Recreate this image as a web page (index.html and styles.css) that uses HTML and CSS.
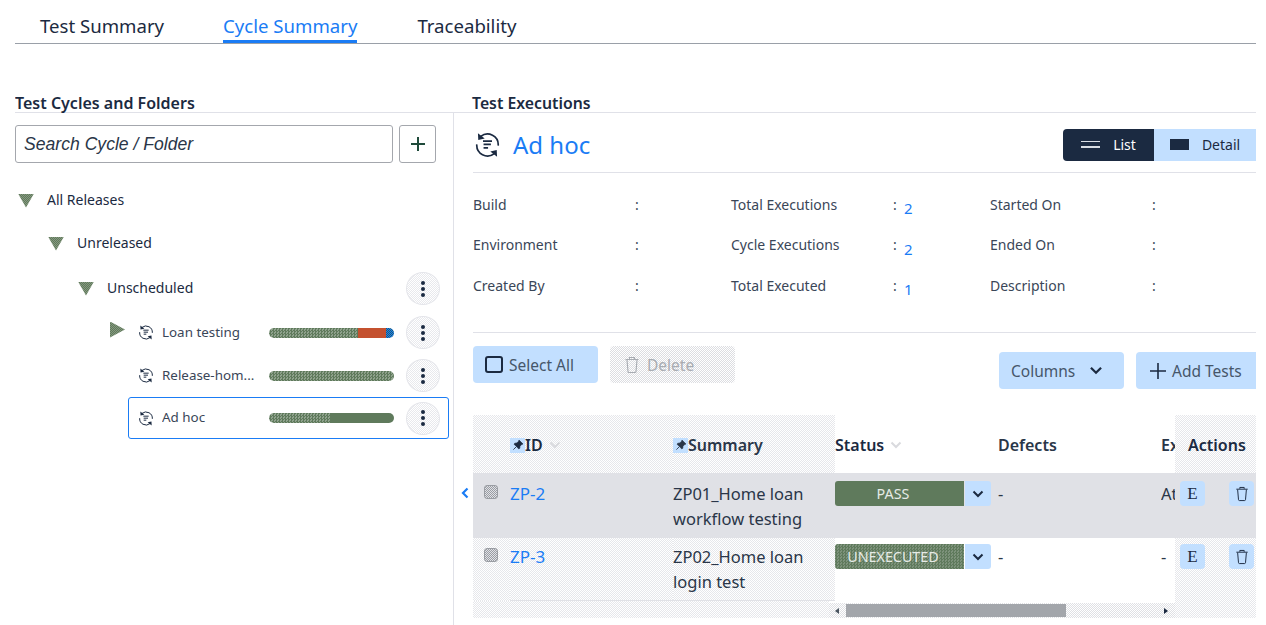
FILE: index.html
```html
<!DOCTYPE html>
<html lang="en">
<head>
    <meta charset="UTF-8">
    <meta name="viewport" content="width=device-width, initial-scale=1.0">
    <title>Cycle Summary</title>
    <link rel="stylesheet" href="styles.css">
</head>
<body>
    <svg class="defs" width="0" height="0">
        <symbol id="cycle" viewBox="0 0 24 24">
            <path d="M6 4.400A9.500 9.500 0 0 1 21.500 12.500M18 19.600A9.500 9.500 0 0 1 2.500 11.500" fill="none" stroke="currentColor" stroke-width="1.500"/>
            <path d="M3.500 1.500 3.800 7.500 9.500 6.300zM20.500 22.500 20.200 16.500 14.500 17.700z" fill="currentColor"/>
            <path d="M8 8.500h8M8.500 11.500h6.500M8.500 14.500h4" fill="none" stroke="currentColor" stroke-width="1.500"/>
        </symbol>
        <symbol id="trash" viewBox="0 0 16 18">
            <path d="M1.500 3.500h13M5.500 3V1.500h5V3M3 4l1 11.500c0 .6.500 1 1 1h6c.500 0 1-.4 1-1L13 4" fill="none" stroke="currentColor" stroke-width="1.100"/>
        </symbol>
        <symbol id="chev" viewBox="0 0 12 8">
            <path d="M1.500 1.500 6 6l4.500-4.500" fill="none" stroke="currentColor" stroke-width="2"/>
        </symbol>
        <symbol id="pin" viewBox="0 0 12 12">
            <path d="M7 1l4 4-1.200.4L8 7.200 7.800 9.200 6.800 10 4.500 7.500 1.500 10.500 4.500 7.500 2 5.200l.8-1 2-.2 1.800-1.800z" fill="currentColor" stroke="currentColor" stroke-width=".6"/>
        </symbol>
    </svg>

    <div class="page">
        <nav class="tabs">
            <a class="tab">Test Summary</a>
            <a class="tab active">Cycle Summary</a>
            <a class="tab">Traceability</a>
        </nav>

        <div class="headings">
            <h2 class="left-head">Test Cycles and Folders</h2>
            <h2>Test Executions</h2>
        </div>

        <div class="columns">
            <!-- left tree -->
            <aside class="side">
                <div class="search-row">
                    <input class="search" type="text" placeholder="Search Cycle / Folder">
                    <button class="add-btn">
                        <svg width="16" height="16" viewBox="0 0 16 16"><path d="M8 1v14M1 8h14" stroke="#1f4a3a" stroke-width="2"/></svg>
                    </button>
                </div>

                <div class="tree">
                    <div class="node lvl0"><span class="tri"></span><span class="node-name">All Releases</span></div>
                    <div class="node lvl1"><span class="tri"></span><span class="node-name">Unreleased</span></div>
                    <div class="node lvl2 gap-top">
                        <span class="tri"></span><span class="node-name grow">Unscheduled</span>
                        <span class="dots"><i></i><i></i><i></i></span>
                    </div>
                    <div class="node lvl3 gap-top-small">
                        <span class="tri closed"></span>
                        <svg class="cycle-small"><use href="#cycle"/></svg>
                        <span class="cycle-name">Loan testing</span>
                        <span class="bar">
                            <span class="seg dith" style="width:89px"></span>
                            <span class="seg red" style="width:28px"></span>
                            <span class="seg blue" style="width:8px"></span>
                        </span>
                        <span class="dots"><i></i><i></i><i></i></span>
                    </div>
                    <div class="node lvl3">
                        <svg class="cycle-small"><use href="#cycle"/></svg>
                        <span class="cycle-name">Release-hom...</span>
                        <span class="bar"><span class="seg dith" style="width:125px"></span></span>
                        <span class="dots"><i></i><i></i><i></i></span>
                    </div>
                    <div class="node lvl3 selected">
                        <svg class="cycle-small"><use href="#cycle"/></svg>
                        <span class="cycle-name">Ad hoc</span>
                        <span class="bar">
                            <span class="seg dith" style="width:61px"></span>
                            <span class="seg green" style="width:64px"></span>
                        </span>
                        <span class="dots"><i></i><i></i><i></i></span>
                    </div>
                </div>
            </aside>

            <!-- right panel -->
            <main class="main">
                <span class="collapse">
                    <svg width="8" height="12" viewBox="0 0 8 12"><path d="M6.500 1.500 2 6l4.500 4.500" fill="none" stroke="#1a7cf5" stroke-width="2.200"/></svg>
                </span>

                <div class="cycle-head">
                    <svg class="cycle-big"><use href="#cycle"/></svg>
                    <span class="cycle-title">Ad hoc</span>
                    <div class="view-switch">
                        <span class="view on"><span class="lines"></span>List</span>
                        <span class="view"><span class="block"></span>Detail</span>
                    </div>
                </div>

                <div class="meta">
                    <span>Build</span><span>:</span><span></span>
                    <span>Total Executions</span><span>:</span><a class="num">2</a>
                    <span>Started On</span><span>:</span>

                    <span>Environment</span><span>:</span><span></span>
                    <span>Cycle Executions</span><span>:</span><a class="num">2</a>
                    <span>Ended On</span><span>:</span>

                    <span>Created By</span><span>:</span><span></span>
                    <span>Total Executed</span><span>:</span><a class="num">1</a>
                    <span>Description</span><span>:</span>
                </div>

                <div class="toolbar">
                    <button class="btn select-all"><span class="box"></span>Select All</button>
                    <button class="btn delete"><svg width="16" height="18"><use href="#trash"/></svg>Delete</button>
                    <button class="btn columns-btn">Columns<svg width="14" height="9"><use href="#chev"/></svg></button>
                    <button class="btn add-tests">
                        <svg width="18" height="18" viewBox="0 0 18 18"><path d="M9 1v16M1 9h16" stroke="#1b2a41" stroke-width="1.600"/></svg>Add Tests
                    </button>
                </div>

                <div class="grid-wrap">
                    <div class="grid-body">
                        <div class="row head">
                            <div class="cell c-check"></div>
                            <div class="cell c-id"><span class="pin"><svg width="12" height="12"><use href="#pin"/></svg></span>ID<svg class="sort" width="12" height="8"><use href="#chev"/></svg></div>
                            <div class="cell c-sum"><span class="pin"><svg width="12" height="12"><use href="#pin"/></svg></span>Summary</div>
                            <div class="cell c-status">Status<svg class="sort" width="12" height="8"><use href="#chev"/></svg></div>
                            <div class="cell c-def">Defects</div>
                            <div class="cell c-ex">Ex</div>
                        </div>
                        <div class="row r1">
                            <div class="cell c-check"><span class="check"></span></div>
                            <div class="cell c-id"><a>ZP-2</a></div>
                            <div class="cell c-sum">ZP01_Home loan workflow testing</div>
                            <div class="cell c-status">
                                <span class="status">PASS</span><span class="status-drop"><svg width="12" height="8"><use href="#chev"/></svg></span>
                            </div>
                            <div class="cell c-def">-</div>
                            <div class="cell c-ex">At</div>
                        </div>
                        <div class="row r2">
                            <div class="cell c-check"><span class="check"></span></div>
                            <div class="cell c-id"><a>ZP-3</a></div>
                            <div class="cell c-sum">ZP02_Home loan login test</div>
                            <div class="cell c-status">
                                <span class="status dotted">UNEXECUTED</span><span class="status-drop"><svg width="12" height="8"><use href="#chev"/></svg></span>
                            </div>
                            <div class="cell c-def">-</div>
                            <div class="cell c-ex">-</div>
                        </div>
                        <div class="scroll-row">
                            <div class="scroll-pin"></div>
                            <div class="scrollbar">
                                <span class="arrow-l"></span>
                                <span class="thumb"></span>
                                <span class="arrow-r"></span>
                            </div>
                        </div>
                    </div>

                    <div class="actions">
                        <div class="act-head">Actions</div>
                        <div class="act-row r1">
                            <span class="act-btn">E</span>
                            <span class="act-btn"><svg width="14" height="16"><use href="#trash"/></svg></span>
                        </div>
                        <div class="act-row r2">
                            <span class="act-btn">E</span>
                            <span class="act-btn"><svg width="14" height="16"><use href="#trash"/></svg></span>
                        </div>
                    </div>
                </div>
            </main>
        </div>
    </div>
</body>
</html>
```

FILE: styles.css
```css
* {
    box-sizing: border-box;
}
html, body {
    margin: 0;
    height: 625px;
    overflow: hidden;
    background-color: #fff;
}
body {
    font-family: "Noto Sans", Arial, sans-serif;
    color: #1b2a41;
}
.defs {
    position: absolute;
}
.page {
    width: 1241px;
    margin-left: 15px;
    height: 625px;
    overflow: hidden;
}

/* tabs */
.tabs {
    display: flex;
    gap: 60px;
    height: 44px;
    padding: 13px 0 0 25px;
    border-bottom: 1px solid #9aa0a8;
}
.tab {
    font-size: 18.6px;
    line-height: 26px;
    height: 30px;
    color: #1b2a41;
}
.tab.active {
    color: #1a7cf5;
    border-bottom: 3px solid #1a7cf5;
    margin-left: -1px;
}

/* section titles */
.headings {
    display: flex;
    height: 69px;
    padding-top: 48px;
    border-bottom: 1px solid #e0e1e8;
}
.headings h2 {
    margin: 0;
    font-size: 15.8px;
    line-height: 23px;
    font-weight: 600;
}
.headings .left-head {
    width: 457px;
    font-size: 16px;
}

.columns {
    display: flex;
    height: 513px;
}

/* left tree */
.side {
    width: 439px;
    border-right: 1px solid #e0e1e8;
    flex-shrink: 0;
    padding-top: 12px;
}
.search-row {
    display: flex;
    gap: 6px;
    height: 38px;
}
.search {
    width: 378px;
    height: 38px;
    border: 1px solid #a4a7ad;
    border-radius: 3px;
    padding: 0 8px;
    font-family: "Liberation Sans", Arial, sans-serif;
    font-size: 17.6px;
    font-style: italic;
}
.search::placeholder {
    color: #2a3648;
    opacity: 1;
}
.add-btn {
    width: 37px;
    height: 38px;
    background-color: #fff;
    border: 1px solid #a4a7ad;
    border-radius: 3px;
    padding: 0;
    display: flex;
    align-items: center;
    justify-content: center;
}
.tree {
    margin-top: 16px;
}
.node {
    display: flex;
    align-items: center;
    height: 43px;
    font-size: 14px;
    color: #1b2a41;
}
.lvl0 { padding-left: 3px; }
.lvl1 { padding-left: 33px; }
.lvl2 { padding-left: 63px; }
.lvl3 {
    margin-left: 113px;
    width: 321px;
    padding-left: 9px;
    border: 1px solid transparent;
    border-radius: 3px;
}
.gap-top { margin-top: 2px; }
.gap-top-small { margin-top: 1px; }
.tri {
    width: 16px;
    height: 14px;
    background: repeating-conic-gradient(#5f7a5c 0 25%, #86987f 0 50%) 0 0 / 2px 2px;
    clip-path: polygon(0 0, 100% 0, 50% 100%);
    margin-right: 13px;
    flex-shrink: 0;
}
.node-name {
    margin-top: -2px;
}
.node-name.grow {
    flex: 1;
}
/* the closed arrow sits left of the selectable box */
.tri.closed {
    width: 15px;
    height: 16px;
    clip-path: polygon(0 0, 100% 50%, 0 100%);
    margin: -6px 13px 0 -28px;
}
.cycle-small {
    width: 16px;
    height: 17px;
    margin-right: 8px;
    color: #1b2a41;
    flex-shrink: 0;
}
.cycle-name {
    width: 107px;
    flex-shrink: 0;
    color: #3a4658;
    white-space: nowrap;
    overflow: hidden;
    font-size: 13.4px;
    margin-top: -2px;
}
.selected {
    border-color: #1a7cf5;
    height: 42px;
}
.bar {
    display: flex;
    width: 125px;
    height: 10px;
    border-radius: 5px;
    overflow: hidden;
    flex-shrink: 0;
}
.seg {
    display: block;
    height: 100%;
}
.dith {
    background: repeating-conic-gradient(#5f7a5c 0 25%, #8fa28d 0 50%) 0 0 / 3px 3px;
}
.green { background-color: #5f7a5c; }
.red { background-color: #c4512f; }
.blue {
    background: repeating-conic-gradient(#1a7cf5 0 25%, #1f5f70 0 50%) 0 0 / 2px 2px;
}
.dots {
    width: 34px;
    height: 33px;
    margin-left: 12px;
    border-radius: 50%;
    border: 1px solid #e4e5ea;
    background: repeating-conic-gradient(#e8e9ed 0 25%, #fff 0 50%) 0 0 / 2px 2px;
    display: flex;
    flex-direction: column;
    align-items: center;
    justify-content: center;
    gap: 2px;
    flex-shrink: 0;
}
.dots i {
    width: 4px;
    height: 4px;
    border-radius: 50%;
    background-color: #1b2a41;
}
.lvl2 .dots {
    margin-left: 0;
    margin-right: 13px;
}

/* right panel */
.main {
    flex: 1;
    min-width: 0;
    padding-left: 19px;
    position: relative;
}
.collapse {
    position: absolute;
    left: 7px;
    top: 369px;
}
.cycle-head {
    display: flex;
    align-items: center;
    height: 60px;
    padding-top: 4px;
    border-bottom: 1px solid #e0e1e8;
}
.cycle-big {
    width: 27px;
    height: 28px;
    margin: 0 12px 0 1px;
    color: #1b2a41;
}
.cycle-title {
    font-size: 24px;
    color: #1a7cf5;
    flex: 1;
}
.view-switch {
    display: flex;
    height: 32px;
    font-size: 14px;
}
.view {
    display: flex;
    align-items: center;
    justify-content: center;
    background-color: #c2dfff;
    width: 102px;
    gap: 13px;
}
.view.on {
    width: 91px;
    background-color: #1b2a41;
    color: #fff;
    border-radius: 4px 0 0 4px;
}
.lines {
    width: 19px;
    height: 7px;
    border-top: 1px solid #d8dde4;
    border-bottom: 2px solid #d8dde4;
}
.block {
    width: 19px;
    height: 11px;
    background-color: #1b2a41;
}
.meta {
    display: grid;
    grid-template-columns: 162px 96px 0 162px 11px 86px 162px 20px;
    grid-auto-rows: 40.500px;
    align-items: center;
    height: 160px;
    padding-top: 11px;
    border-bottom: 1px solid #e0e1e8;
    font-size: 14px;
    color: #3a4658;
}
.num {
    color: #1a7cf5;
    font-size: 15px;
    padding-top: 9px;
    line-height: 1;
}
.toolbar {
    display: flex;
    align-items: flex-start;
    padding-top: 13px;
    height: 82px;
    white-space: nowrap;
    width: 783px;
    overflow: hidden;
}
.btn {
    height: 37px;
    border: none;
    border-radius: 4px;
    background-color: #c2dfff;
    font-family: inherit;
    font-size: 15.5px;
    color: #46566a;
    display: flex;
    align-items: center;
    padding: 0;
    flex-shrink: 0;
}
.select-all {
    width: 125px;
    padding-left: 12px;
    gap: 6px;
}
.box {
    width: 18px;
    height: 17px;
    border: 2px solid #1b2a41;
    border-radius: 3px;
}
.delete {
    width: 125px;
    margin-left: 12px;
    padding-left: 14px;
    gap: 7px;
    color: #a8acb2;
    background: repeating-conic-gradient(#dcdde1 0 25%, #fff 0 50%) 0 0 / 2px 2px;
}
.columns-btn {
    width: 125px;
    margin-left: 264px;
    margin-top: 6px;
    padding-left: 12px;
    gap: 14px;
}
.columns-btn svg {
    color: #1b2a41;
}
.add-tests {
    width: 130px;
    margin-left: 12px;
    margin-top: 6px;
    padding-left: 13px;
    gap: 5px;
}

/* table */
.grid-wrap {
    display: flex;
    width: 783px;
    height: 203px;
}
.grid-body {
    width: 702px;
    flex-shrink: 0;
    overflow: hidden;
}
.row {
    display: grid;
    grid-template-columns: 37px 163px 162px 163px 163px 14px;
    font-size: 16.500px;
    line-height: 25px;
}
.head {
    height: 58px;
    font-weight: 600;
    font-size: 16px;
}
.r1 {
    height: 65px;
    background-color: #e0e1e6;
}
.r2 {
    height: 63px;
}
.cell {
    height: 100%;
    white-space: nowrap;
    overflow: hidden;
}
.head .cell {
    display: flex;
    align-items: center;
    padding-top: 2px;
}
.head .c-check, .head .c-id, .head .c-sum,
.r2 .c-check, .r2 .c-id, .r2 .c-sum,
.scroll-pin, .actions {
    background: repeating-conic-gradient(#e6e7eb 0 25%, #fff 0 50%) 0 0 / 2px 2px;
}
.r1 .cell {
    padding-top: 8px;
}
.r2 .cell {
    padding-top: 6px;
}
.r2 .c-id, .r2 .c-sum {
    border-bottom: 1px solid #e0e1e6;
}
.c-sum {
    white-space: normal;
    padding-right: 25px;
    color: #2a3648;
}
.head .c-sum {
    white-space: nowrap;
}
.c-id a {
    color: #1a7cf5;
    font-size: 17px;
}
.pin {
    width: 15px;
    height: 15px;
    background-color: #c2dfff;
    display: flex;
    align-items: center;
    justify-content: center;
}
.sort {
    margin-left: 6px;
    color: #d9dade;
}
.check {
    display: block;
    width: 14px;
    height: 14px;
    margin: 4px 0 0 11px;
    border-radius: 3px;
    border: 1px solid #9a9da3;
    background: repeating-conic-gradient(#9a9da3 0 25%, #e0e1e6 0 50%) 0 0 / 2px 2px;
}
.row:not(.head) .c-status {
    display: flex;
    align-items: flex-start;
    gap: 1px;
}
.status {
    width: 129px;
    height: 25px;
    padding-right: 13px;
    background-color: #5f7a5c;
    border-radius: 3px 0 0 3px;
    color: #e6ebe6;
    font-size: 14.300px;
    line-height: 25px;
    text-align: center;
}
.status.dotted {
    background: repeating-conic-gradient(#5f7a5c 0 25%, #7d927b 0 50%) 0 0 / 3px 3px;
}
.status-drop {
    width: 26px;
    height: 25px;
    background-color: #c2dfff;
    border-radius: 0 3px 3px 0;
    display: flex;
    align-items: center;
    justify-content: center;
}
.c-def, .c-ex {
    color: #2a3648;
}
.scroll-row {
    display: flex;
    height: 17px;
}
.scroll-pin {
    width: 356px;
}
.scrollbar {
    flex: 1;
    display: flex;
    align-items: center;
    margin-top: 2px;
    background: repeating-conic-gradient(#dfe0e4 0 25%, #fff 0 50%) 0 0 / 2px 2px;
}
.thumb {
    width: 220px;
    height: 13px;
    margin-left: 7px;
    background-color: #a3a6ab;
}
.arrow-l, .arrow-r {
    width: 0;
    height: 0;
    border-top: 3px solid transparent;
    border-bottom: 3px solid transparent;
}
.arrow-l {
    border-right: 4px solid #4a5560;
    margin-left: 6px;
}
.arrow-r {
    border-left: 4px solid #1b2a41;
    margin-left: 98px;
}
.actions {
    width: 81px;
    flex-shrink: 0;
}
.act-head {
    height: 58px;
    padding-left: 13px;
    font-size: 16px;
    font-weight: 600;
    line-height: 61px;
}
.act-row {
    display: flex;
    gap: 24px;
    padding-left: 5px;
}
.act-row.r1 {
    height: 65px;
    padding-top: 8px;
}
.act-row.r2 {
    height: 63px;
    padding-top: 6px;
    background-color: transparent;
}
.act-btn {
    width: 25px;
    height: 25px;
    background-color: #c2dfff;
    border-radius: 4px;
    display: flex;
    align-items: center;
    justify-content: center;
    font-family: "Liberation Serif", serif;
    font-size: 17px;
    flex-shrink: 0;
}
```
